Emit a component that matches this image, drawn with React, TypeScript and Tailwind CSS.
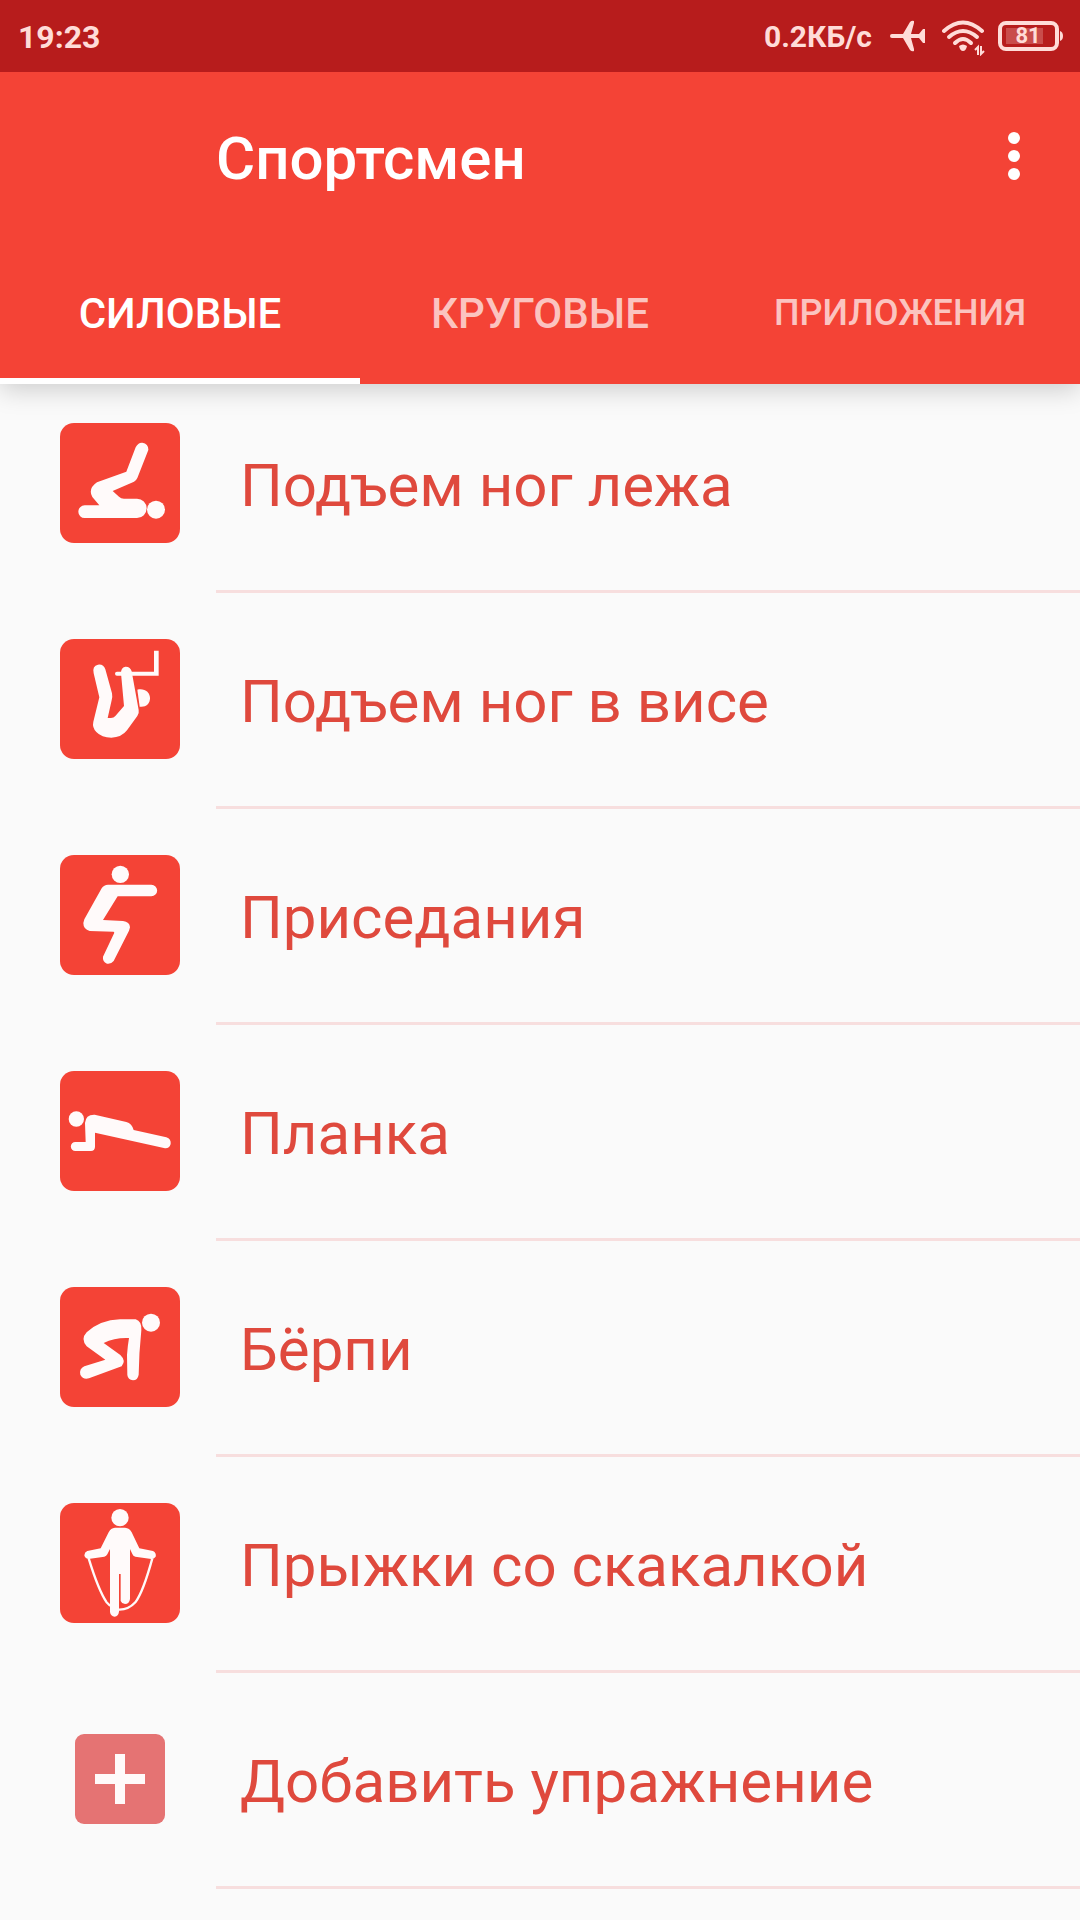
import { useState } from 'react';
import type { ReactNode } from 'react';

/* =========================
   EXERCISE ICONS
========================== */
const LegRaiseIcon = () => (
  <svg viewBox="30 39 360 360" className="size-full" fill="currentColor" aria-hidden="true">
    <path d="M257 112Q264 97 277 98Q296 101 295 120L262 204Q259 211 252 215L188 243L207 260Q213 266 222 266H261A29 29 0 0 1 261 324H104A19 19 0 0 1 104 286H148L127 261Q113 236 141 217L229 185Z" />
    <circle cx="318" cy="299" r="27" />
  </svg>
);

const HangingRaiseIcon = () => (
  <svg viewBox="30 27 360 360" className="size-full" fill="currentColor" aria-hidden="true">
    <path d="M131 130Q126 108 144 104Q161 102 166 118L186 190Q188 200 185 211L173 264H183Q191 264 196 258L222 228L213 130Q212 113 226 110Q241 109 245 124L266 240Q268 250 262 258L231 301Q214 323 184 323Q155 323 139 306Q126 292 130 275L148 202Z" />
    <path d="M201 125H312V62H326V137H201A6 6 0 0 1 201 125Z" />
    <path d="M262 179C284 174 300 187 300 205C300 222 286 233 269 230Z" />
  </svg>
);

const SquatIcon = () => (
  <svg viewBox="30 27 360 360" className="size-full" fill="currentColor" aria-hidden="true">
    <circle cx="211" cy="85" r="26" />
    <path d="M174 116H304A17 17 0 0 1 304 151H203L159 222L219 225Q239 227 240 244L237 254L191 345Q183 355 171 353Q157 347 159 332L193 260L191 257L119 255Q100 250 100 231L103 220L155 127Q162 116 174 116Z" />
  </svg>
);

const PlankIcon = () => (
  <svg viewBox="30 27 360 360" className="size-full" fill="currentColor" aria-hidden="true">
    <circle cx="79" cy="171" r="23" />
    <path d="M134 158L229 180Q246 185 251 204L349 226Q364 231 362 246Q358 260 345 259L135 212V255Q134 267 123 267H76A13 13 0 0 1 76 240H107L105 183Q107 157 134 158Z" />
  </svg>
);

const BurpeeIcon = () => (
  <svg viewBox="30 27 360 360" className="size-full" fill="currentColor" aria-hidden="true">
    <circle cx="303" cy="134" r="27" />
    <path d="M110 163Q150 126 210 124H257Q276 130 274 157Q267 225 266 290Q263 307 249 307Q234 306 232 291L231 231Q233 203 237 180Q195 178 161 195L211 231Q229 248 215 265L117 301Q99 306 91 290Q87 272 103 265L166 245L110 205Q91 183 110 163Z" />
  </svg>
);

const JumpRopeIcon = () => (
  <svg viewBox="30 27 360 360" className="size-full" fill="currentColor" aria-hidden="true">
    <circle cx="210" cy="71" r="26" />
    <path d="M195 101H225Q239 102 245 115L268 163L309 171Q320 177 317 188Q312 195 304 195L256 188Q249 186 247 180L240 165V315Q238 330 225 330Q215 329 212 321V240H207V353Q205 367 194 368Q182 367 180 354V165L172 181Q169 187 163 188L115 195Q105 194 103 184Q104 174 112 171L152 163L176 115Q182 102 195 101Z" />
    <path
      d="M116 193C132 245 153 300 170 325Q178 336 190 339M206 347Q235 348 256 325C275 300 290 255 307 193"
      fill="none"
      stroke="currentColor"
      strokeWidth="7"
    />
  </svg>
);

const PlusIcon = () => (
  <svg viewBox="0 0 90 90" className="size-full" fill="currentColor" aria-hidden="true">
    <path d="M40 20H50V40H70V50H50V70H40V50H20V40H40Z" />
  </svg>
);

/* =========================
   STATUS BAR ICONS
========================== */
const AirplaneIcon = () => (
  <svg viewBox="0 0 36 32" className="w-9 h-8" fill="currentColor" aria-hidden="true">
    <path d="M2 14H13L20 2Q22 0 24 1V3L21 14H29L33 9H35V23H33L29 18H21L24 29V31Q22 32 20 30L13 18H2Q0 18 0 16Q0 14 2 14Z" />
  </svg>
);

const WifiIcon = () => (
  <svg viewBox="0 0 44 36" className="w-11 h-9" fill="none" stroke="currentColor" aria-hidden="true">
    <path d="M2 11Q21 -6 40 11" strokeWidth="4" strokeLinecap="round" />
    <path d="M7 17Q21 5 35 17" strokeWidth="4" strokeLinecap="round" />
    <path d="M13 23Q21 15 29 23" strokeWidth="4" strokeLinecap="round" />
    <path d="M17 26Q21 23 25 26Q24 31 21 31Q18 31 17 26Z" fill="currentColor" stroke="none" />
    <path d="M33 30L36 27V35M39 26V34L42 31" strokeWidth="2" />
  </svg>
);

const BatteryIcon = () => (
  <svg viewBox="0 0 66 30" className="w-[66px] h-[30px]" fill="none" aria-hidden="true">
    <rect x="2" y="2" width="57" height="26" rx="6" stroke="currentColor" strokeWidth="4" />
    <rect x="8" y="7" width="37" height="16" fill="currentColor" fillOpacity="0.25" />
    <path d="M62 10Q65 11 65 15Q65 19 62 20Z" fill="currentColor" />
  </svg>
);

/* =========================
   DATA
========================== */
const tabs = [
  { id: 'strength', title: 'СИЛОВЫЕ', size: 'text-[42px]' },
  { id: 'circuit', title: 'КРУГОВЫЕ', size: 'text-[42px]' },
  { id: 'apps', title: 'ПРИЛОЖЕНИЯ', size: 'text-[36px]' },
];

const exercises: { title: string; icon: ReactNode }[] = [
  { title: 'Подъем ног лежа', icon: <LegRaiseIcon /> },
  { title: 'Подъем ног в висе', icon: <HangingRaiseIcon /> },
  { title: 'Приседания', icon: <SquatIcon /> },
  { title: 'Планка', icon: <PlankIcon /> },
  { title: 'Бёрпи', icon: <BurpeeIcon /> },
  { title: 'Прыжки со скакалкой', icon: <JumpRopeIcon /> },
];

const Row = ({ title, children }: { title: string; children: ReactNode }) => (
  <li>
    <button className="flex w-full h-[216px] text-left">
      <span className="w-[216px] shrink-0 flex items-center pl-[60px] pb-1">
        <span className="w-[120px] flex justify-center">{children}</span>
      </span>
      <span className="flex-1 flex items-center pl-6 pt-1 border-b-3 border-[#f7dede] text-[60px] leading-[70px] text-[#df493d]">
        {title}
      </span>
    </button>
  </li>
);

export default function App() {
  const [activeTab, setActiveTab] = useState('strength');

  return (
    <div className="min-h-screen bg-[#fafafa] font-['Roboto',sans-serif]">
      <header className="relative z-10 bg-[#f44336] text-white shadow-[0_6px_24px_rgba(0,0,0,0.18)]">
        <div className="h-[72px] bg-[#b71c1c] text-[#ffdcd8] flex items-center justify-between pl-[18px] pr-4">
          <span className="text-[32px] leading-10 font-bold pt-0.5">19:23</span>
          <div className="flex items-center">
            <span className="text-[30px] leading-10 font-bold mr-[18px] pt-0.5">0.2КБ/с</span>
            <AirplaneIcon />
            <span className="ml-4 mr-3 pt-1">
              <WifiIcon />
            </span>
            <span className="relative">
              <BatteryIcon />
              <span className="absolute inset-y-0 left-0 w-[60px] flex items-center justify-center text-[22px] leading-none font-bold">
                81
              </span>
            </span>
          </div>
        </div>

        <div className="h-[168px] flex items-center justify-between pl-[216px] pr-12">
          <h1 className="text-[60px] leading-[70px] font-medium pt-1.5">Спортсмен</h1>
          <button aria-label="Меню" className="w-9 h-16 flex flex-col items-center justify-center gap-[6px]">
            <span className="size-3 rounded-full bg-white" />
            <span className="size-3 rounded-full bg-white" />
            <span className="size-3 rounded-full bg-white" />
          </button>
        </div>

        <div role="tablist" className="grid grid-cols-3 h-[144px]">
          {tabs.map(tab => (
            <button
              key={tab.id}
              role="tab"
              aria-selected={activeTab === tab.id}
              onClick={() => setActiveTab(tab.id)}
              className={`border-b-6 pt-2 font-medium ${tab.size} ${
                activeTab === tab.id
                  ? 'border-white text-white'
                  : 'border-transparent text-white/70'
              }`}
            >
              {tab.title}
            </button>
          ))}
        </div>
      </header>

      {/* list is scrolled slightly under the header */}
      <ul className="-mt-[7px]">
        {exercises.map(exercise => (
          <Row key={exercise.title} title={exercise.title}>
            <span className="size-[120px] rounded-[14px] bg-[#f44336] text-[#fffafa]">
              {exercise.icon}
            </span>
          </Row>
        ))}
        <Row title="Добавить упражнение">
          <span className="size-[90px] rounded-[9px] bg-[#e57373] text-[#fffafa]">
            <PlusIcon />
          </span>
        </Row>
      </ul>
    </div>
  );
}
